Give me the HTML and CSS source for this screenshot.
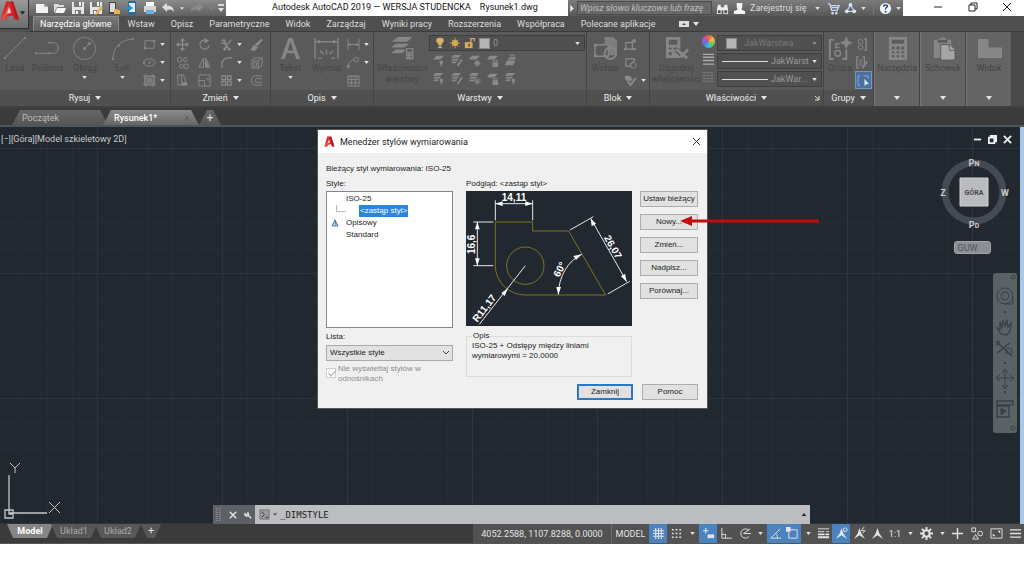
FILE: index.html
```html
<!DOCTYPE html>
<html lang="pl">
<head>
<meta charset="utf-8">
<title>Autodesk AutoCAD 2019 — WERSJA STUDENCKA Rysunek1.dwg</title>
<link rel="stylesheet" href="styles.css">
</head>
<body>
<svg class="sprite" aria-hidden="true">
  <symbol id="caret" viewBox="0 0 6 4"><path d="M0 0h6L3 4z" fill="currentColor"/></symbol>
  <symbol id="a-logo" viewBox="0 0 20 20"><path d="M6 1h7l6 18h-5l-1-4-6 1-1 3H1z" fill="#d3222a"/><path d="M1 19 9 4l3 8-5 3-2 4z" fill="#ee4a48"/><path d="m9 7 2 5-4 1z" fill="#fff" opacity=".85"/><path d="m13 1 6 18h-3L11 1z" fill="#b51a20"/></symbol>
  <symbol id="new" viewBox="0 0 14 14"><path d="M1 3h8l4 3v6H1z" fill="#f2f2f2"/><path d="M9 3v3h4z" fill="#aaa"/></symbol>
  <symbol id="open" viewBox="0 0 14 14"><path d="M1 12V3h4l1 1h5v2H4z" fill="#ddd"/><path d="m4 7h9l-2 5H2z" fill="#f5f5f5"/></symbol>
  <symbol id="save" viewBox="0 0 14 14"><path d="M1 1h12v12H1z" fill="#e6e6e6"/><path d="M3 1h8v5H3zM4 9h6v4H4z" fill="#777"/><path d="M8 1h2v4H8zM5 10h2v3H5z" fill="#f5f5f5"/></symbol>
  <symbol id="saveas" viewBox="0 0 14 14"><use href="#save"/><path d="m12 5-5 6-1 3 3-1 5-6z" fill="#e5b15b"/></symbol>
  <symbol id="web" viewBox="0 0 14 14"><path d="M2 1h7v12H2z" fill="#444"/><path d="M3 2h5v9H3z" fill="#ddd"/><path d="M7 8h3l1 1h2v4H7z" fill="#e5b15b"/></symbol>
  <symbol id="mobile" viewBox="0 0 14 14"><path d="M3 0h8v14H3z" fill="#2d6d91"/><path d="M4 2h6v9H4z" fill="#d9eaf2"/><path d="M0 6h4V4l4 3-4 3V8H0z" fill="#328cc0"/></symbol>
  <symbol id="print" viewBox="0 0 14 14"><path d="M3 1h8v4H3z" fill="#fff"/><path d="M1 5h12v6H1z" fill="#d5d5d5"/><path d="M3 9h8v4H3z" fill="#6bb2dc"/></symbol>
  <symbol id="undo" viewBox="0 0 14 14"><path d="m1 6 5-4v3c4-1 7 2 7 6-2-3-4-3-7-2v2z" fill="currentColor"/></symbol>
  <symbol id="more" viewBox="0 0 8 10"><path d="M1 1h6v2H1zM1 5h6L4 9z" fill="currentColor"/></symbol>
  <symbol id="binoc" viewBox="0 0 14 14"><path d="M2 3h3v2h1v8H1V8zM9 3h3l1 5v5H8V5h1zM6 6h2v3H6z" fill="#eee"/><path d="M2 9h3v3H2zM9 9h3v3H9z" fill="#555"/></symbol>
  <symbol id="user" viewBox="0 0 14 14"><path d="M4 1h6v5L9 8l4 2v3H1v-3l4-2-1-2z" fill="#f3f3f3"/></symbol>
  <symbol id="cart" viewBox="0 0 14 14"><g fill="none" stroke="#c9d9f2" stroke-width="1.400"><path d="M1 2h2l2 7h6l2-5H4M5 6h7"/></g><circle cx="6" cy="12" r="1.400" fill="#c9d9f2"/><circle cx="10" cy="12" r="1.400" fill="#c9d9f2"/></symbol>
  <symbol id="a360" viewBox="0 0 14 14"><path d="M7 3 3 10h8z" fill="none" stroke="#bfd3f1" stroke-width="1.400"/><g fill="#dbe6fa"><circle cx="7" cy="3" r="2"/><circle cx="3" cy="10" r="2"/><circle cx="11" cy="10" r="2"/></g></symbol>
  <symbol id="help" viewBox="0 0 14 14"><circle cx="7" cy="7" r="6" fill="#f8f8f8"/><path d="M5 5c0-3 5-2 4 0-1 1-2 1-2 3M7 9.500v2" fill="none" stroke="#234c8f" stroke-width="1.600"/></symbol>

  <symbol id="line" viewBox="0 0 26 26"><path d="M3 23 24 2" fill="none" stroke="currentColor"/><path d="M2 22h2v2H2zM23 1h2v2h-2z" fill="currentColor"/></symbol>
  <symbol id="pline" viewBox="0 0 26 26"><path d="M1 18h18c7 0 7-11 0-11h-4" fill="none" stroke="currentColor"/><path d="M0 17h2v2H0zM14 17h2v2h-2zM14 6h2v2h-2z" fill="currentColor"/></symbol>
  <symbol id="circle" viewBox="0 0 26 26"><circle cx="13" cy="13" r="11.500" fill="none" stroke="currentColor"/><path d="m12 14 6-6M12 12h2v2h-2zM17 7h2v2h-2z" stroke="currentColor" fill="currentColor"/></symbol>
  <symbol id="arc" viewBox="0 0 26 26"><path d="M3 24C3 12 11 4 24 3" fill="none" stroke="currentColor"/><path d="M2 23h2v2H2zM8 9h2v2H8zM23 2h2v2h-2z" fill="currentColor"/></symbol>
  <symbol id="rect" viewBox="0 0 14 14"><path d="M2 3h10v8H2z" fill="none" stroke="currentColor"/><path d="M1 10h2v2H1zM11 2h2v2h-2z" fill="currentColor"/></symbol>
  <symbol id="ellipse" viewBox="0 0 14 14"><ellipse cx="7" cy="7" rx="6" ry="4" fill="none" stroke="currentColor"/><path d="M6 6h2v2H6zM0 6h2v2H0z" fill="currentColor"/></symbol>
  <symbol id="hatch" viewBox="0 0 14 14"><path d="M2 2h10v10H2zM0 3h14M0 11h14M3 0v14M11 0v14" fill="none" stroke="currentColor"/><path d="M4 4h6v6H4z" fill="currentColor" opacity=".7"/></symbol>
  <symbol id="move" viewBox="0 0 14 14"><path d="M7 2v10M2 7h10" stroke="currentColor" stroke-width="1.400"/><path d="m7 0 3 3H4zM7 14l3-3H4zM0 7l3-3v6zM14 7l-3-3v6z" fill="currentColor"/></symbol>
  <symbol id="rotate" viewBox="0 0 14 14"><path d="M10 3a5 5 0 1 0 2 5" fill="none" stroke="currentColor" stroke-width="1.300"/><path d="M7 0v6l5-3z" fill="currentColor"/></symbol>
  <symbol id="trim" viewBox="0 0 14 14"><path d="m2 2 3 2 4 8M12 2 7 8l-2 4M4 1l3 7M1 5l6 2" fill="none" stroke="currentColor" stroke-width="1.500"/><circle cx="5" cy="12" r="1.500" fill="currentColor"/><circle cx="10" cy="12" r="1.500" fill="currentColor"/></symbol>
  <symbol id="erase" viewBox="0 0 14 14"><path d="m12 1 2 1-6 7-3-2z" fill="currentColor"/><path d="m4 8 4 2-2 3H1z" fill="currentColor" stroke="currentColor"/></symbol>
  <symbol id="copy" viewBox="0 0 14 14"><g fill="none" stroke="currentColor"><circle cx="4" cy="4" r="2.500"/><circle cx="10" cy="4" r="2"/><circle cx="6" cy="11" r="2"/><circle cx="11" cy="11" r="2.500"/></g></symbol>
  <symbol id="mirror" viewBox="0 0 14 14"><path d="M6 2v10H1zM8 2v10h5z" fill="none" stroke="currentColor"/><path d="M8 3v9h4z" fill="currentColor"/></symbol>
  <symbol id="fillet" viewBox="0 0 14 14"><path d="M2 13V9c0-4 3-7 7-7h4" fill="none" stroke="currentColor" stroke-width="1.300"/></symbol>
  <symbol id="box" viewBox="0 0 14 14"><path d="M2 5h7v8H2zM2 5l3-3h8v8l-4 3M9 5l4-3M4 7h3v4H4z" fill="none" stroke="currentColor"/></symbol>
  <symbol id="stretch" viewBox="0 0 14 14"><path d="M2 1h6l4 11H2zM6 1v11" fill="none" stroke="currentColor"/><path d="M6 9h6v3H6z" fill="currentColor"/></symbol>
  <symbol id="scale" viewBox="0 0 14 14"><path d="M1 1h12v12H1zM1 7h6v6M9 5h2v2" fill="none" stroke="currentColor"/></symbol>
  <symbol id="array" viewBox="0 0 14 14"><path d="M2 2h4v4H2zM8 2h4v4H8zM2 8h4v4H2zM8 8h4v4H8z" fill="none" stroke="currentColor" stroke-width="1.300"/></symbol>
  <symbol id="offset" viewBox="0 0 14 14"><path d="M13 2H6c-6 0-6 10 0 10h7M13 5H7c-2 0-2 4 0 4h6" fill="none" stroke="currentColor"/></symbol>
  <symbol id="text" viewBox="0 0 26 26"><path d="M3 24 11 2h4l8 22h-4l-2-6H9l-2 6zm7-9h6L13 6z" fill="currentColor"/></symbol>
  <symbol id="dim" viewBox="0 0 26 26"><path d="M1 2v22M25 2v22M2 6h22M13 14v5M6 15l4 4M20 15l-4 4M4 23h4M18 23h4" fill="none" stroke="currentColor" stroke-width="1.400"/><path d="m2 6 4-2v4zM24 6l-4-2v4z" fill="currentColor"/></symbol>
  <symbol id="dimlin" viewBox="0 0 14 14"><path d="M1 1v12M13 1v12M2 7h10" stroke="currentColor"/><path d="m1 7 3-2v4zM13 7l-3-2v4z" fill="currentColor"/></symbol>
  <symbol id="leader" viewBox="0 0 14 14"><path d="M1 13c0-5 2-8 7-9" fill="none" stroke="currentColor"/><circle cx="10" cy="4" r="2.500" fill="none" stroke="currentColor"/><path d="M0 10h4l-3 4z" fill="currentColor"/></symbol>
  <symbol id="table" viewBox="0 0 14 14"><path d="M1 2h12v11H1zM1 6h12M1 9.500h12M5 4v9M9 4v9M1 3h12" fill="none" stroke="currentColor"/></symbol>
  <symbol id="layers" viewBox="0 0 26 26"><path d="m8 1h15l-5 5H2zM6 8h14l-5 4H1zM6 14h11l-4 4H1z" fill="currentColor"/><path d="M16 12h9v13h-9z" fill="#858585" stroke="#555"/><path d="M18 14h5v2h-5zM18 18h1v1h-1zM21 18h2v1h-2zM18 21h1v1h-1zM21 21h2v1h-2z" fill="#505050"/></symbol>
  <symbol id="lay" viewBox="0 0 14 14"><path d="M4 1h8L9 4H1zM3 5h7L8 7H1zM3 8h5l-2 2H1z" fill="currentColor"/></symbol>
  <symbol id="lay-bulb" viewBox="0 0 14 14"><use href="#lay"/><circle cx="10" cy="9" r="2.500" fill="currentColor" stroke="#555"/><path d="M9 11h2v2H9z" fill="currentColor"/></symbol>
  <symbol id="lay-off" viewBox="0 0 14 14"><path d="M5 2h8L9 6H1z" fill="currentColor"/><circle cx="10" cy="9" r="2.500" fill="currentColor" stroke="#555"/><path d="M9 11h2v2H9z" fill="currentColor"/></symbol>
  <symbol id="lay-pen" viewBox="0 0 14 14"><use href="#lay"/><path d="m13 6-5 7" stroke="#5a5a5a" stroke-width="4"/><path d="m13 6-5 7" stroke="currentColor" stroke-width="2"/></symbol>
  <symbol id="lay-sun" viewBox="0 0 14 14"><path d="M4 2h9L9 6H1z" fill="currentColor"/><circle cx="10" cy="10" r="2.500" fill="currentColor"/><path d="M10 6v8M6 10h8M7 7l6 6M13 7l-6 6" stroke="currentColor" stroke-width=".7"/></symbol>
  <symbol id="lay-frz" viewBox="0 0 14 14"><use href="#lay"/><circle cx="10" cy="10" r="3" fill="#5a5a5a"/><path d="M10 6v8M6 10h8M7 7l6 6M13 7l-6 6" stroke="currentColor"/></symbol>
  <symbol id="lay-lock" viewBox="0 0 14 14"><path d="M4 2h9L9 6H1zM7 9h6v5H7z" fill="currentColor"/><path d="M8 9V7h4v2" fill="none" stroke="currentColor"/></symbol>
  <symbol id="lay-cur" viewBox="0 0 14 14"><path d="M3 7h9l-2 5H1zM5 4h8l-1 2H4z" fill="currentColor"/><path d="M7 1h4v3H7z" fill="none" stroke="currentColor"/></symbol>
  <symbol id="bulb" viewBox="0 0 14 14"><path d="M7 1c6 0 5 5 2 7v2H5V8C2 6 1 1 7 1z" fill="#d9b36a"/><path d="M5 11h4v2H5z" fill="#bbb"/></symbol>
  <symbol id="sun" viewBox="0 0 14 14"><circle cx="7" cy="7" r="3.500" fill="#dba954"/><path d="M7 1v12M1 7h12M3 3l8 8M11 3l-8 8" stroke="#dba954"/></symbol>
  <symbol id="lock" viewBox="0 0 14 14"><path d="M1 6h9v7H1z" fill="#d9aa5b"/><path d="M8 6V2h4v3" fill="none" stroke="#d9aa5b" stroke-width="1.500"/><path d="M5 8h2v3H5z" fill="#555"/></symbol>
  <symbol id="insert" viewBox="0 0 26 26"><path d="M12 1h9l4 4v15H12z" fill="currentColor" opacity=".8"/><path d="M2 9h14v12H2z" fill="#5a5a5a" stroke="currentColor" stroke-width="1.500"/><circle cx="18" cy="18" r="6" fill="none" stroke="currentColor" stroke-width="2"/><path d="M1 8h3v3H1zM1 19h3v3H1z" fill="currentColor"/></symbol>
  <symbol id="blk1" viewBox="0 0 14 14"><path d="M2 5h7v7H2zM8 5l3-3" fill="none" stroke="currentColor" stroke-width="1.300"/><circle cx="11" cy="3" r="2" fill="currentColor"/><path d="M0 11h3v2H0zM8 11h5v2H8z" fill="currentColor"/></symbol>
  <symbol id="blk2" viewBox="0 0 14 14"><path d="M2 3h10M2 3v8h6M7 9l5-5" fill="none" stroke="currentColor" stroke-width="1.300"/><circle cx="10" cy="10" r="3" fill="none" stroke="currentColor"/></symbol>
  <symbol id="blk3" viewBox="0 0 14 14"><path d="M1 2h5l4 4-4 4-5-4z" fill="currentColor"/><path d="m4 8 3 4 6-8" fill="none" stroke="#5a5a5a" stroke-width="4"/><path d="m4 8 3 4 6-8" fill="none" stroke="currentColor" stroke-width="2"/></symbol>
  <symbol id="match" viewBox="0 0 26 26"><path d="M2 1h15v22H2z" fill="currentColor"/><path d="M5 4h9v5H5zM5 12h3v2H5zM10 12h4v2h-4zM5 17h3v3H5z" fill="#5c5c5c"/><path d="m13 14 9 9M24 14l-7 8" stroke="#5a5a5a" stroke-width="5"/><path d="m13 14 11 9M25 14l-8 8" stroke="currentColor" stroke-width="3"/></symbol>
  <symbol id="lines" viewBox="0 0 14 14"><path d="M1 1.500h12M1 4.500h12M1 8h12M1 12h12" stroke="#aaa" stroke-width="1.500"/></symbol>
  <symbol id="dashes" viewBox="0 0 14 14"><path d="M1 2h12M1 5h12M1 8h12M1 11h12" stroke="#858585" stroke-dasharray="3 1"/></symbol>
  <symbol id="group" viewBox="0 0 26 26"><path d="M6 4H2v20h4M15 24h4V14" fill="none" stroke="currentColor" stroke-width="2"/><circle cx="10" cy="18" r="3" fill="none" stroke="currentColor" stroke-width="1.500"/><path d="M12 8H8v4h4" fill="none" stroke="currentColor" stroke-width="1.500"/><path d="m19 0 2 5 5 2-5 2-2 5-2-5-5-2 5-2z" fill="currentColor"/></symbol>
  <symbol id="ungroup" viewBox="0 0 14 14"><path d="M10 1h2v12h-2" fill="none" stroke="currentColor" stroke-width="1.500"/><circle cx="6" cy="4" r="2.500" fill="none" stroke="currentColor"/><circle cx="6" cy="10" r="2.500" fill="none" stroke="currentColor"/></symbol>
  <symbol id="gedit" viewBox="0 0 14 14"><path d="M4 1H2v12h2M8 1h2v8" fill="none" stroke="currentColor" stroke-width="1.400"/><circle cx="6" cy="5" r="1.500" fill="none" stroke="currentColor"/><circle cx="6" cy="9" r="1.500" fill="none" stroke="currentColor"/><path d="m13 6-5 7" stroke="currentColor" stroke-width="2"/></symbol>
  <symbol id="gsel" viewBox="0 0 14 14"><path d="M3 2H1v10h2M7 2h5v4" fill="none" stroke="#a8c5e8" stroke-dasharray="2 1"/><path d="M8 5v8l2-2h3z" fill="#d6e5f7"/></symbol>
  <symbol id="calc" viewBox="0 0 26 26"><path d="M4 1h19v24H4z" fill="currentColor"/><path d="M7 4h13v4H7zM7 11h3v3H7zM12 11h3v3h-3zM17 11h3v3h-3zM7 16h3v2H7zM12 16h3v2h-3zM17 16h3v2h-3zM7 20h3v2H7zM12 20h3v2h-3zM17 20h3v2h-3z" fill="#5c5c5c"/></symbol>
  <symbol id="clip" viewBox="0 0 26 26"><path d="M3 4h5l1-2h2l1-2 1 2h2l1 2h5v19H3z" fill="currentColor"/><path d="M7 4h10v3H7z" fill="#5c5c5c"/><path d="M10 9h10l5 5v11H10z" fill="#a5a5a5" stroke="#5c5c5c"/><path d="M19 9v6h6" fill="none" stroke="#666"/></symbol>
  <symbol id="view" viewBox="0 0 26 26"><path d="M1 3h11v9h14v11H1z" fill="currentColor"/></symbol>

  <symbol id="s-grid" viewBox="0 0 14 14"><path d="M4 1v12M7 1v12M10 1v12M1 4h12M1 7h12M1 10h12" stroke="currentColor" stroke-width="1.200"/></symbol>
  <symbol id="s-snap" viewBox="0 0 14 14"><path d="M2 3h2M6 3h2M10 3h2M2 7h2M6 7h2M10 7h2M2 11h2M6 11h2M10 11h2" stroke="currentColor" stroke-width="1.600"/></symbol>
  <symbol id="s-dyn" viewBox="0 0 14 14"><path d="M4 1v6M1 4h6" stroke="currentColor" stroke-width="1.200"/><path d="M6 8h7v4H6z" fill="currentColor"/></symbol>
  <symbol id="s-ortho" viewBox="0 0 14 14"><path d="M2 1v11h11M2 8h4v4" fill="none" stroke="currentColor"/></symbol>
  <symbol id="s-polar" viewBox="0 0 14 14"><path d="M12 4a5 5 0 1 0 0 6M6 7l7-5M6 7h8" fill="none" stroke="currentColor"/></symbol>
  <symbol id="s-angle" viewBox="0 0 14 14"><path d="M12 2 2 12h11" fill="none" stroke="currentColor"/><path d="M7 7c2 1 2 3 2 5" fill="none" stroke="currentColor"/></symbol>
  <symbol id="s-osnap" viewBox="0 0 14 14"><path d="M3 3h9v9H3z" fill="none" stroke="currentColor"/><path d="M0 0h5v5H0z" fill="currentColor"/></symbol>
  <symbol id="s-lw" viewBox="0 0 14 14"><path d="M1 2h12M1 5h7M10 5h3" stroke="currentColor"/><path d="M1 7h7v2H1zM9 7h4v2H9zM1 10h12v2H1z" fill="currentColor"/></symbol>
  <symbol id="s-ann" viewBox="0 0 14 14"><path d="M7 1 9 7l4 6-6-4-6 4 4-6z" fill="currentColor"/></symbol>
  <symbol id="s-ann1" viewBox="0 0 14 14"><use href="#s-ann"/><circle cx="11" cy="3" r="2" fill="none" stroke="currentColor"/></symbol>
  <symbol id="s-ann2" viewBox="0 0 14 14"><use href="#s-ann"/><path d="m12 0-3 4h4l-3 3" fill="none" stroke="currentColor"/></symbol>
  <symbol id="s-gear" viewBox="0 0 14 14"><circle cx="7" cy="7" r="3.500" fill="none" stroke="currentColor" stroke-width="2.400"/><path d="M7 0v3M7 11v3M0 7h3M11 7h3M2 2l2 2M10 10l2 2M12 2l-2 2M2 12l2-2" stroke="currentColor" stroke-width="2"/></symbol>
  <symbol id="s-plus" viewBox="0 0 14 14"><path d="M7 1v12M1 7h12" stroke="currentColor" stroke-width="1.500"/></symbol>
  <symbol id="s-iso" viewBox="0 0 14 14"><path d="M2 1h4v4H2zM6 8l3 5H3z" fill="none" stroke="currentColor"/><circle cx="11" cy="7" r="2.500" fill="none" stroke="currentColor"/></symbol>
  <symbol id="s-full" viewBox="0 0 14 14"><path d="M1 2h12v10H1z" fill="none" stroke="currentColor"/><path d="M8 4h3v3zM3 7v3h3z" fill="currentColor"/></symbol>
  <symbol id="s-menu" viewBox="0 0 14 14"><path d="M1 3h12M1 7h12M1 11h12" stroke="currentColor" stroke-width="1.400"/></symbol>
  <symbol id="w-min" viewBox="0 0 10 10"><path d="M1 5h8" stroke="currentColor"/></symbol>
  <symbol id="w-max" viewBox="0 0 10 10"><path d="M1 3h6v6H1zM3 3V1h6v6H7" fill="none" stroke="currentColor"/></symbol>
  <symbol id="w-x" viewBox="0 0 10 10"><path d="m1 1 8 8M9 1 1 9" stroke="currentColor"/></symbol>
</svg>

<div class="app">
  <header class="top">
    <button class="app-menu" aria-label="Menu aplikacji"><svg class="logo"><use href="#a-logo"/></svg><svg class="caret"><use href="#caret"/></svg></button>
    <div class="titlebar">
      <div class="qat">
        <button aria-label="Nowy"><svg><use href="#new"/></svg></button>
        <button aria-label="Otwórz"><svg><use href="#open"/></svg></button>
        <button aria-label="Zapisz"><svg><use href="#save"/></svg></button>
        <button aria-label="Zapisz jako"><svg><use href="#saveas"/></svg></button>
        <button aria-label="Otwórz z sieci"><svg><use href="#web"/></svg></button>
        <button aria-label="Zapisz na urządzeniu"><svg><use href="#mobile"/></svg></button>
        <button aria-label="Drukuj"><svg><use href="#print"/></svg></button>
        <button aria-label="Cofnij"><svg><use href="#undo"/></svg></button>
        <svg class="caret"><use href="#caret"/></svg>
        <button class="dim" aria-label="Ponów"><svg class="flip"><use href="#undo"/></svg></button>
        <svg class="caret dim"><use href="#caret"/></svg>
        <button class="narrow" aria-label="Dostosuj"><svg><use href="#more"/></svg></button>
      </div>
      <div class="title"><span>Autodesk AutoCAD 2019 — WERSJA STUDENCKA</span><span>Rysunek1.dwg</span></div>
      <div class="info">
        <svg class="play" viewBox="0 0 4 8"><path d="M0 0v8l4-4z" fill="#eee"/></svg>
        <input type="text" class="search" aria-label="Szukaj" placeholder="Wpisz słowo kluczowe lub frazę">
        <button class="find" aria-label="Szukaj"><svg><use href="#binoc"/></svg></button>
        <button class="signin"><svg><use href="#user"/></svg>Zarejestruj się</button>
        <svg class="caret"><use href="#caret"/></svg>
        <button aria-label="Sklep"><svg><use href="#cart"/></svg></button>
        <button aria-label="Autodesk 360"><svg><use href="#a360"/></svg></button>
        <svg class="caret"><use href="#caret"/></svg>
        <button class="helpbtn" aria-label="Pomoc"><svg><use href="#help"/></svg></button>
        <svg class="caret"><use href="#caret"/></svg>
      </div>
      <div class="winctl">
        <button aria-label="Minimalizuj"><svg><use href="#w-min"/></svg></button>
        <button aria-label="Przywróć"><svg><use href="#w-max"/></svg></button>
        <button aria-label="Zamknij program"><svg><use href="#w-x"/></svg></button>
      </div>
    </div>
    <nav class="tabs">
      <button class="on">Narzędzia główne</button><button>Wstaw</button><button>Opisz</button><button>Parametryczne</button><button>Widok</button><button>Zarządzaj</button><button>Wyniki pracy</button><button>Rozszerzenia</button><button>Współpraca</button><button>Polecane aplikacje</button>
      <button class="ribmode" aria-label="Tryb wstążki"><svg class="ribicon" viewBox="0 0 10 6"><path d="M0 0h10v6H0z" fill="#ddd"/><path d="M3 4h4L5 2z" fill="#444"/></svg><svg class="caret"><use href="#caret"/></svg></button>
    </nav>
  </header>

  <div class="ribbon">
    <section class="panel draw">
      <div class="tools">
        <button class="big"><svg><use href="#line"/></svg>Linia</button>
        <button class="big"><svg><use href="#pline"/></svg>Polilinia</button>
        <button class="big"><svg><use href="#circle"/></svg>Okrąg<svg class="caret"><use href="#caret"/></svg></button>
        <button class="big"><svg><use href="#arc"/></svg>Łuk<svg class="caret"><use href="#caret"/></svg></button>
        <div class="small one">
          <button aria-label="Prostokąt"><svg><use href="#rect"/></svg><svg class="caret"><use href="#caret"/></svg></button>
          <button aria-label="Elipsa"><svg><use href="#ellipse"/></svg><svg class="caret"><use href="#caret"/></svg></button>
          <button aria-label="Kreskuj"><svg><use href="#hatch"/></svg><svg class="caret"><use href="#caret"/></svg></button>
        </div>
      </div>
      <button class="name">Rysuj<svg class="caret"><use href="#caret"/></svg></button>
    </section>
    <section class="panel">
      <div class="tools">
        <div class="small mod">
          <button aria-label="Przesuń"><svg><use href="#move"/></svg></button><button aria-label="Obróć"><svg><use href="#rotate"/></svg></button><button aria-label="Utnij"><svg><use href="#trim"/></svg><svg class="caret"><use href="#caret"/></svg></button><button aria-label="Wymaż"><svg><use href="#erase"/></svg></button>
          <button aria-label="Kopiuj"><svg><use href="#copy"/></svg></button><button aria-label="Lustro"><svg><use href="#mirror"/></svg></button><button aria-label="Zaokrągl"><svg><use href="#fillet"/></svg><svg class="caret"><use href="#caret"/></svg></button><button aria-label="Rozbij"><svg><use href="#box"/></svg></button>
          <button aria-label="Rozciągnij"><svg><use href="#stretch"/></svg></button><button aria-label="Skala"><svg><use href="#scale"/></svg></button><button aria-label="Szyk"><svg><use href="#array"/></svg><svg class="caret"><use href="#caret"/></svg></button><button aria-label="Odsuń"><svg><use href="#offset"/></svg></button>
        </div>
      </div>
      <button class="name">Zmień<svg class="caret"><use href="#caret"/></svg></button>
    </section>
    <section class="panel">
      <div class="tools">
        <button class="big"><svg><use href="#text"/></svg>Tekst<svg class="caret"><use href="#caret"/></svg></button>
        <button class="big"><svg><use href="#dim"/></svg>Wymiar</button>
        <div class="small one">
          <button aria-label="Liniowy"><svg><use href="#dimlin"/></svg><svg class="caret"><use href="#caret"/></svg></button>
          <button aria-label="Odniesienie"><svg><use href="#leader"/></svg><svg class="caret"><use href="#caret"/></svg></button>
          <button aria-label="Tabela"><svg><use href="#table"/></svg></button>
        </div>
      </div>
      <button class="name">Opis<svg class="caret"><use href="#caret"/></svg></button>
    </section>
    <section class="panel">
      <div class="tools">
        <button class="big wide"><svg><use href="#layers"/></svg>Właściwości warstwy</button>
        <div class="layerbox">
          <label class="combo light"><svg><use href="#bulb"/></svg><svg><use href="#sun"/></svg><svg><use href="#lock"/></svg><span class="swatch"></span><select aria-label="Warstwa"><option>0</option></select><svg class="caret"><use href="#caret"/></svg></label>
          <div class="small lay">
            <button aria-label="Wyłącz"><svg><use href="#lay-off"/></svg></button><button aria-label="Izoluj"><svg><use href="#lay-pen"/></svg></button><button aria-label="Zablokuj widok"><svg><use href="#lay-sun"/></svg></button><button aria-label="Zamknij warstwę"><svg><use href="#lay-lock"/></svg></button><button aria-label="Uaktualnij"><svg><use href="#lay-cur"/></svg></button>
            <button aria-label="Włącz wszystkie"><svg><use href="#lay-bulb"/></svg></button><button aria-label="Anuluj izolację"><svg><use href="#lay-pen"/></svg></button><button aria-label="Odblokuj widok"><svg><use href="#lay-frz"/></svg></button><button aria-label="Otwórz warstwę"><svg><use href="#lay-lock"/></svg></button><button aria-label="Dopasuj warstwę"><svg><use href="#lay-bulb"/></svg></button>
          </div>
        </div>
      </div>
      <button class="name">Warstwy<svg class="caret"><use href="#caret"/></svg></button>
    </section>
    <section class="panel">
      <div class="tools">
        <button class="big"><svg><use href="#insert"/></svg>Wstaw</button>
        <div class="small one">
          <button aria-label="Utwórz blok"><svg><use href="#blk1"/></svg></button>
          <button aria-label="Edytuj blok"><svg><use href="#blk2"/></svg></button>
          <button aria-label="Edytuj atrybuty"><svg><use href="#blk3"/></svg><svg class="caret"><use href="#caret"/></svg></button>
        </div>
      </div>
      <button class="name">Blok<svg class="caret"><use href="#caret"/></svg></button>
    </section>
    <section class="panel">
      <div class="tools">
        <button class="big wide"><svg><use href="#match"/></svg>Uzgodnij właściwości</button>
        <div class="props">
          <span class="wheel"></span><label class="combo"><span class="swatch"></span><select aria-label="Kolor" disabled><option>JakWarstwa</option></select><svg class="caret dim"><use href="#caret"/></svg></label>
          <svg class="pi"><use href="#lines"/></svg><label class="combo"><span class="rule"></span><select class="lw" aria-label="Szerokość linii"><option>JakWarst</option></select><svg class="caret"><use href="#caret"/></svg></label>
          <svg class="pi"><use href="#dashes"/></svg><label class="combo"><span class="rule"></span><select class="lw" aria-label="Rodzaj linii"><option>JakWar...</option></select><svg class="caret"><use href="#caret"/></svg></label>
        </div>
      </div>
      <div class="name">Właściwości<svg class="caret"><use href="#caret"/></svg><button class="launch" aria-label="Okno właściwości"><svg viewBox="0 0 6 6"><path d="m1 1 4 4M5 1v4H1" fill="none" stroke="#ddd"/></svg></button></div>
    </section>
    <section class="panel">
      <div class="tools">
        <button class="big"><svg><use href="#group"/></svg>Grupa</button>
        <div class="small grp">
          <button aria-label="Rozgrupuj"><svg><use href="#ungroup"/></svg></button>
          <button aria-label="Edytuj grupę"><svg><use href="#gedit"/></svg></button>
          <button class="lit" aria-label="Wybór grupy"><svg><use href="#gsel"/></svg></button>
        </div>
      </div>
      <button class="name">Grupy<svg class="caret"><use href="#caret"/></svg></button>
    </section>
    <section class="panel slim">
      <div class="tools"><button class="big"><svg><use href="#calc"/></svg>Narzędzia</button></div>
      <button class="name" aria-label="Rozwiń Narzędzia"><svg class="caret"><use href="#caret"/></svg></button>
    </section>
    <section class="panel slim">
      <div class="tools"><button class="big"><svg><use href="#clip"/></svg>Schowek</button></div>
      <button class="name" aria-label="Rozwiń Schowek"><svg class="caret"><use href="#caret"/></svg></button>
    </section>
    <section class="panel slim">
      <div class="tools"><button class="big"><svg><use href="#view"/></svg>Widok</button></div>
      <button class="name" aria-label="Rozwiń Widok"><svg class="caret"><use href="#caret"/></svg></button>
    </section>
  </div>

  <nav class="files">
    <button class="file">Początek</button>
    <button class="file on">Rysunek1*<svg><use href="#w-x"/></svg></button>
    <button class="file add" aria-label="Nowy rysunek">+</button>
  </nav>

  <main class="canvas">
    <p class="viewlabel">[−][Góra][Model szkieletowy 2D]</p>
    <div class="docctl">
      <button aria-label="Minimalizuj rysunek"><svg><use href="#w-min"/></svg></button><button aria-label="Przywróć rysunek"><svg><use href="#w-max"/></svg></button><button aria-label="Zamknij rysunek"><svg><use href="#w-x"/></svg></button>
    </div>
    <svg class="cube" viewBox="0 0 74 78">
      <circle cx="37" cy="38" r="29" fill="none" stroke="#454b55" stroke-width="7"/>
      <path d="M23 24h28v28H23z" fill="#b9bbbd" stroke="#d2d3d4"/>
      <text x="37" y="41" class="face">GÓRA</text>
      <text x="37" y="12">P<tspan font-size="7">N</tspan></text><text x="6" y="42">Z</text><text x="68" y="42">W</text><text x="37" y="74">P<tspan font-size="7">D</tspan></text>
    </svg>
    <button class="ucs">GUW</button>
    <svg class="navbar" viewBox="0 0 24 160" fill="none" stroke="#3a4047">
      <circle cx="20" cy="4" r="2"/><circle cx="20" cy="155" r="2"/>
      <circle cx="12" cy="23" r="8"/><circle cx="12" cy="23" r="4"/><path d="M12 31h8v-8"/>
      <path d="M11 39h2M11 90h2M11 119h2" stroke-width="2"/>
      <path d="m8 61-4-6 3 1V49l2 5 1-7 2 6 2-6 1 7 3-4-1 8-3 4z" stroke-width="1.300"/>
      <path d="m4 69 15 14M17 70 4 80" stroke-width="1.500"/><circle cx="16" cy="78" r="3"/><circle cx="5" cy="70" r="2"/>
      <path d="M12 97v18M4 105h16M9 100l3-4 3 4M9 112l3 4 3-4M7 102l-4 3 4 3M17 102l4 3-4 3"/>
      <path d="M4 128h16v4H4zM4 133h12v11H4z" stroke-width="1.500"/><path d="m8 135 5 3-5 4z" fill="#3a4047"/>
    </svg>
    <svg class="axes" viewBox="0 0 66 60" fill="none" stroke="#c3c6ca">
      <path d="M9 13v39M9 51h38M5 48h8v8H5zM9 48v4h4" stroke-width="1.300"/>
      <path d="m10 1 5 5 5-5M15 6v5M49 40l11 11M60 40 49 51"/>
    </svg>

    <section class="dialog" aria-label="Menedżer stylów wymiarowania">
      <header class="dlg-title"><svg><use href="#a-logo"/></svg><h1>Menedżer stylów wymiarowania</h1><button aria-label="Zamknij okno"><svg><use href="#w-x"/></svg></button></header>
      <div class="dlg-body">
        <p class="current">Bieżący styl wymiarowania: ISO-25</p>
        <div class="col">
          <p class="lbl">Style:</p>
          <ul class="list">
            <li>ISO-25</li>
            <li class="child"><mark>&lt;zastąp styl&gt;</mark></li>
            <li class="ann"><svg viewBox="0 0 8 8"><path d="M4 1 1 7h6zM4 1l1 5" fill="#c4d9ee" stroke="#48749e"/></svg>Opisowy</li>
            <li>Standard</li>
          </ul>
          <label class="lbl lista" for="filter">Lista:</label>
          <div class="pick"><select id="filter"><option>Wszystkie style</option></select><svg viewBox="0 0 8 5"><path d="m1 1 3 3 3-3" fill="none" stroke="#444"/></svg></div>
          <label class="check"><input type="checkbox" checked disabled><span>Nie wyświetlaj stylów w odnośnikach</span></label>
        </div>
        <div class="col">
          <p class="lbl">Podgląd: &lt;zastąp styl&gt;</p>
          <svg class="preview" viewBox="0 0 498 405">
            <g fill="none" stroke="#7d7420" stroke-width="3"><path d="M88 93h112v27h108l111 192H178a90 88 0 0 1-90-88z"/><circle cx="178" cy="224" r="56"/></g>
            <g fill="none" stroke="#e8e8e8" stroke-width="3"><path d="M88 88V28M200 88V28M88 38h112M82 93H22M82 224H22M34 93v131M312 117l70-40M425 309l66-38M374 82l108 190M178 224 40 400M347 190c-42 20-69 68-70 120"/></g>
            <g fill="#fff"><path d="m88 38 22-7v14zM200 38l-22-7v14zM34 93l-7 22h14zM34 224l-7-22h14zM374 82l3 24 13-8zM482 272l-5-24-12 8zM126 292l-20 14 10 9zM347 190l-25 5 8 12zM277 312l-6-24h14z"/></g>
            <g class="dims"><text x="144" y="30">14,11</text><text transform="translate(26 160) rotate(-90)">16,6</text><text transform="translate(432 173) rotate(60)">26,07</text><text transform="translate(290 240) rotate(-62)">60°</text><text transform="translate(63 358) rotate(-52)">R11,17</text></g>
          </svg>
          <fieldset class="desc"><legend>Opis</legend>ISO-25 + Odstępy między liniami wymiarowymi = 20.0000</fieldset>
        </div>
        <div class="col actions">
          <button>Ustaw bieżący</button><button>Nowy...</button><button>Zmień...</button><button>Nadpisz...</button><button>Porównaj...</button>
        </div>
        <footer class="dlg-foot"><button class="default">Zamknij</button><button>Pomoc</button></footer>
      </div>
    </section>
    <svg class="arrow" viewBox="0 0 140 12"><path d="M0 6 12 1v10z" fill="#c00d0d"/><path d="M10 6h129" stroke="#c00d0d" stroke-width="3"/></svg>

    <div class="cmd">
      <svg class="grip" viewBox="0 0 6 16"><path d="M1 1v14M4 1v14" stroke="#aaa" stroke-dasharray="1 1"/></svg>
      <button aria-label="Zamknij wiersz"><svg viewBox="0 0 10 10"><path d="m1 1 8 8M9 1 1 9" stroke="#ddd" stroke-width="2"/></svg></button>
      <button aria-label="Dostosuj wiersz"><svg viewBox="0 0 10 10"><path d="m4 4 5 5" stroke="#ddd" stroke-width="2"/><path d="M1 2a3 3 0 1 0 3-1v2L3 4z" fill="#ddd"/></svg></button>
      <div class="cmdline"><svg class="prompt" viewBox="0 0 12 12"><path d="M1 1h10v10H1z" fill="#9a9b9d" stroke="#707274"/><path d="m3 3 3 3-3 3M7 9h3" fill="none" stroke="#333"/></svg><svg class="caret"><use href="#caret"/></svg><input type="text" aria-label="Wiersz poleceń" value="_DIMSTYLE"><svg class="caret up"><use href="#caret"/></svg></div>
    </div>
  </main>

  <footer class="status">
    <nav class="layouts"><button class="on">Model</button><button>Układ1</button><button>Układ2</button><button class="add" aria-label="Nowy układ">+</button></nav>
    <div class="stools">
      <span class="coords">4052.2588, 1107.8288, 0.0000</span>
      <button class="space">MODEL</button>
      <button class="lit" aria-label="Siatka"><svg><use href="#s-grid"/></svg></button>
      <button aria-label="Skok"><svg><use href="#s-snap"/></svg></button>
      <svg class="caret"><use href="#caret"/></svg>
      <button class="lit" aria-label="Dane dynamiczne"><svg><use href="#s-dyn"/></svg></button>
      <button aria-label="Orto"><svg><use href="#s-ortho"/></svg></button>
      <button aria-label="Biegunowe"><svg><use href="#s-polar"/></svg></button>
      <svg class="caret"><use href="#caret"/></svg>
      <button class="lit" aria-label="Śledzenie"><svg><use href="#s-angle"/></svg></button>
      <button class="lit" aria-label="Obiekt"><svg><use href="#s-osnap"/></svg></button>
      <svg class="caret"><use href="#caret"/></svg>
      <button aria-label="Szerokość"><svg><use href="#s-lw"/></svg></button>
      <button class="lit" aria-label="Widoczność opisu"><svg><use href="#s-ann1"/></svg></button>
      <button aria-label="Autoskala"><svg><use href="#s-ann2"/></svg></button>
      <button aria-label="Skala opisu"><svg><use href="#s-ann"/></svg></button>
      <button>1:1</button>
      <svg class="caret"><use href="#caret"/></svg>
      <button aria-label="Obszar roboczy"><svg><use href="#s-gear"/></svg></button>
      <svg class="caret"><use href="#caret"/></svg>
      <button aria-label="Monitor"><svg><use href="#s-plus"/></svg></button>
      <button aria-label="Izoluj obiekty"><svg><use href="#s-iso"/></svg></button>
      <button aria-label="Pełny ekran"><svg><use href="#s-full"/></svg></button>
      <button aria-label="Dostosowanie"><svg><use href="#s-menu"/></svg></button>
    </div>
  </footer>
</div>
</body>
</html>
```

FILE: styles.css
```css
* { box-sizing: border-box; }
body { margin: 0; background: #fff; font: 9px/12px Roboto, "Noto Sans", sans-serif; color: #ddd; }
button, select, input { font: inherit; color: inherit; background: none; border: 0; padding: 0; margin: 0; border-radius: 0; }
button { display: flex; align-items: center; justify-content: center; white-space: nowrap; }
select { appearance: none; }
p, ul, h1 { margin: 0; padding: 0; }
svg { flex: none; display: block; }
.sprite { position: absolute; width: 0; height: 0; }
.caret { width: 6px; height: 4px; color: #e4e4e4; }
.dim { color: #8a8a8a; }
.flip { transform: scaleX(-1); }
.app { display: flex; flex-direction: column; min-height: calc(100vh - 30px); }

/* title bar and ribbon tabs */
.top { display: grid; grid-template-columns: 29px 1fr; grid-template-rows: 16px 16px; background: #4f4f4f; }
.app-menu { grid-row: 1 / 3; align-items: flex-start; justify-content: flex-start; height: 29px; background: linear-gradient(#999, #6d6d6d); border: solid #303030; border-width: 0 1px 1px 0; }
.app-menu .logo { width: 20px; height: 21px; }
.app-menu .caret { width: 5px; margin-top: 11px; color: #222; }
.titlebar { display: flex; background: #fff; }
.qat { display: flex; align-items: center; width: 197px; padding-left: 4px; background: linear-gradient(#8a8a8a, #606060); }
.qat button { flex: none; width: 18px; }
.qat button svg { width: 14px; height: 14px; }
.qat .caret { width: 4px; height: 3px; margin: 0 4px 0 3px; }
.qat .narrow { width: 8px; }
.qat .narrow svg { width: 8px; height: 10px; }
.title { flex: 1; display: flex; justify-content: center; gap: 9px; padding-left: 16px; color: #111; line-height: 14px; white-space: nowrap; }
.info { display: flex; align-items: center; width: 335px; background: linear-gradient(#7c7c7c, #585858); }
.info .play { width: 4px; height: 7px; margin: 0 3px 0 2px; }
.info .search { flex: none; width: 135px; height: 14px; padding: 0 2px; font-style: italic; background: #686868; border: 1px solid #4b4b4b; }
.search::placeholder { color: #bdbdbd; opacity: 1; }
.info button svg { width: 13px; height: 13px; }
.info button { margin-right: 4px; }
.info .find { margin: 0 4px; }
.info .signin { gap: 4px; margin-right: 8px; }
.info .caret { width: 5px; height: 3px; margin-right: 7px; }
.info .helpbtn { padding-left: 5px; border-left: 1px solid #777; }
.winctl { display: flex; width: 121px; justify-content: space-between; align-items: flex-start; padding: 2px 12px 0 30px; color: #222; }
.winctl svg { width: 10px; height: 10px; }
.tabs { display: flex; padding-left: 4px; border-bottom: 1px solid #3c3c3c; }
.tabs button { padding: 0 8px; }
.tabs .on { background: linear-gradient(#777, #5e5e5e); color: #fff; border: solid #8a8a8a; border-width: 1px 1px 0; margin-right: 1px; padding: 0 6px; }
.tabs .ribmode { gap: 4px; margin-left: 8px; }
.ribicon { width: 10px; height: 6px; }

/* ribbon */
.ribbon { display: grid; grid-template-columns: 171px 100px 103px 213px 63px 174px 50px 46px 46px 46px 1fr; height: 76px; background: #4a4a4a; border-bottom: 2px solid #404040; }
.panel { display: flex; flex-direction: column; min-width: 0; background: #5a5a5a; border-right: 1px solid #434343; }
.tools { flex: 1; display: flex; justify-content: center; padding: 3px 1px 0; color: #858585; }
.name { display: flex; align-items: center; justify-content: center; height: 16px; gap: 5px; color: #eee; background: #505050; position: relative; }
.launch { position: absolute; right: 3px; top: 5px; }
.launch svg { width: 6px; height: 6px; }
.big { flex-direction: column; justify-content: flex-start; width: 38px; height: 54px; padding-top: 1px; color: #454545; line-height: 11px; }
.big > svg:first-child { width: 25px; height: 25px; margin-bottom: 2px; color: #868686; }
.big .caret { width: 5px; height: 3px; margin-top: 2px; }
.wide { width: 54px; white-space: normal; }
.draw .big:first-child { width: 28px; }
.small { display: grid; grid-auto-rows: 18px; color: #8a8a8a; }
.small button { justify-content: flex-start; gap: 4px; }
.small button svg:first-child { width: 13px; height: 13px; }
.small .caret { width: 5px; height: 3px; }
.one { width: 26px; margin-left: 2px; }
.mod { grid-template-columns: 22px 22px 30px 15px; }
.lay { grid-template-columns: repeat(5, 18px); padding-left: 3px; }
.layerbox { flex: 1; }
.combo { display: flex; align-items: center; gap: 3px; height: 16px; padding: 0 4px; background: #505050; border: 1px solid #3f3f3f; color: #999; }
.combo select { flex: 1; min-width: 0; height: 14px; line-height: 12px; }
.combo > svg:not(.caret) { width: 12px; height: 12px; }
.combo .caret { width: 5px; height: 3px; }
.swatch { width: 11px; height: 11px; background: #b5b5b5; border: 1px solid #888; }
.rule { width: 46px; height: 1px; background: #ddd; }
.props { flex: 1; display: grid; grid-template-columns: 13px 1fr; grid-auto-rows: 18px; gap: 0 2px; }
.props .swatch { margin: 0 4px; }
.props select:disabled { color: #7a7a7a; opacity: 1; }
.pi { width: 13px; height: 13px; }
.wheel { width: 13px; height: 13px; border-radius: 50%; background: conic-gradient(#e85b4b, #f5bc38, #75c756, #3ebbd1, #5178df, #b652cb, #e85b4b); }
.grp { width: 17px; }
.small .lit { justify-content: center; background: #4d6f9c; border: 1px solid #7598c2; }
.panel:nth-child(7) .big { width: 30px; }
.slim { background: #646464; border-left: 1px solid #777; }
.slim .name { background: none; }
.slim .big { width: 44px; }

/* drawing tabs */
.files { display: flex; height: 19px; padding: 2px 0 0 12px; background: #3b3b3b; border-bottom: 2px solid #50545e; }
.file { width: 96px; padding-left: 10px; justify-content: flex-start; background: linear-gradient(#686868, #555); color: #bbb; clip-path: polygon(8px 0, calc(100% - 8px) 0, 100% 100%, 0 100%); border-radius: 6px 6px 0 0; }
.file.on { background: linear-gradient(#8b8b8b, #666); color: #fff; margin-left: -5px; justify-content: space-between; padding: 0 9px 0 11px; font-weight: 500; }
.file svg { width: 6px; height: 6px; color: #444; }
.file.add { width: 22px; padding: 0; justify-content: center; font-size: 12px; color: #ddd; }

/* drawing area */
.canvas { flex: 1; position: relative; min-height: 396px; border-right: 4px solid #a9c7ea; background-color: #212830;
  background-image: linear-gradient(90deg, #2d353f 1px, transparent 1px), linear-gradient(#2d353f 1px, transparent 1px), linear-gradient(90deg, #252c35 1px, transparent 1px), linear-gradient(#252c35 1px, transparent 1px);
  background-size: 125px 125px, 125px 125px, 25px 25px, 25px 25px; background-position: 97px 21px; }
.viewlabel { padding: 6px 1px; color: #ccc; }
.docctl { position: absolute; top: 8px; right: 8px; display: flex; gap: 6px; color: #eee; }
.docctl svg { width: 9px; height: 9px; stroke-width: 2; }
.cube { position: absolute; top: 27px; right: 9px; width: 74px; height: 78px; fill: #ccc; font-size: 9px; font-weight: 700; text-anchor: middle; }
.cube .face { fill: #44484d; font-size: 7px; }
.ucs { position: absolute; top: 114px; right: 29px; width: 37px; height: 13px; padding-right: 10px; border-radius: 3px; background: #8b8f94; border: 1px solid #a0a3a7; color: #50555b; }
.navbar { position: absolute; top: 146px; right: 3px; width: 24px; height: 160px; background: #5c6166; border-radius: 3px; }
.axes { position: absolute; left: 0; bottom: 2px; width: 66px; height: 60px; }
.arrow { position: absolute; left: 680px; top: 88px; width: 140px; height: 12px; }

/* dimension style dialog */
.dialog { position: absolute; left: 317px; top: 2px; width: 391px; background: #f0f0f0; border: 1px solid #555; color: #1c1c1c; font: 8px/10px "Liberation Sans", sans-serif; }
.dlg-title { display: flex; align-items: center; gap: 5px; height: 23px; padding: 0 6px; background: #fff; }
.dlg-title svg { width: 11px; height: 11px; }
.dlg-title h1 { flex: 1; font: 9px/12px Roboto, sans-serif; }
.dlg-title button svg { width: 9px; height: 9px; }
.dlg-body { display: grid; grid-template-columns: 127px 1fr 58px; padding: 11px 9px 8px 8px; }
.current, .dlg-foot { grid-column: 1 / -1; }
.col { display: flex; flex-direction: column; }
.col:nth-child(3) { padding: 0 8px 0 13px; }
.lbl { height: 10px; margin: 5px 0 2px; }
.list { height: 137px; padding-top: 1px; background: #fff; border: 1px solid #82878e; list-style: none; }
.list li { display: flex; align-items: center; height: 12px; padding-left: 19px; }
.list .child { padding-left: 32px; position: relative; }
.list .child::before { content: ""; position: absolute; left: 9px; top: 0; width: 9px; height: 6px; border: solid #bbb; border-width: 0 0 1px 1px; }
.list .ann { padding-left: 4px; gap: 7px; }
.list .ann svg { width: 8px; height: 8px; }
mark { background: #2a86dc; color: #fff; line-height: 12px; padding: 0 1px; }
.lista { margin-top: 4px; margin-bottom: 3px; }
.pick { position: relative; }
.pick select { width: 100%; height: 16px; padding: 0 3px; background: #e2e2e2; border: 1px solid #aaa; }
.pick svg { position: absolute; right: 3px; top: 5px; width: 8px; height: 5px; }
.check { display: flex; gap: 2px; margin-top: 3px; color: #8d8d8d; }
.check input { appearance: none; flex: none; width: 10px; height: 10px; margin-top: 4px; border: 1px solid #ccc; background: #fff; }
.check input::before { content: ""; display: block; width: 3px; height: 6px; margin-left: 3px; border: solid #aaa; border-width: 0 1px 1px 0; transform: rotate(45deg); }
.preview { width: 100%; height: 135px; background: #212830; }
.dims { fill: #fff; font-size: 30px; font-weight: 700; text-anchor: middle; }
.desc { height: 46px; margin: 5px 0 0; padding: 0 5px; border: 1px solid #dcdcdc; }
.desc legend { padding: 0 1px; }
.actions { gap: 7px; padding-top: 17px; }
.actions button, .dlg-foot button { height: 16px; background: #e1e1e1; border: 1px solid #adadad; }
.dlg-foot { display: flex; justify-content: flex-end; gap: 9px; }
.dlg-foot button { width: 56px; }
.dlg-foot .default { border: 2px solid #2a78c8; }

/* command line */
.cmd { position: absolute; left: 213px; bottom: 0; width: 597px; height: 19px; display: flex; align-items: center; background: #5d6064; }
.cmd .grip { width: 6px; height: 16px; margin: 0 3px; }
.cmd button svg { width: 8px; height: 8px; }
.cmd button { width: 15px; }
.cmdline { flex: 1; display: flex; align-items: center; gap: 3px; align-self: stretch; background: #bcbdc0; color: #222; padding: 0 3px 0 4px; }
.cmdline .prompt { width: 11px; height: 11px; }
.cmdline .caret { width: 4px; height: 3px; color: #555; }
.cmdline .up { width: 6px; transform: rotate(180deg); color: #222; }
.cmdline input { flex: 1; min-width: 0; font: 9px/12px "DejaVu Sans Mono", monospace; }

/* status bar */
.status { display: flex; justify-content: space-between; height: 20px; background: #3b3b3b; border-bottom: 1px solid #555; }
.layouts { display: flex; height: 14px; padding-left: 7px; }
.layouts button { width: 46px; margin-right: -2px; background: #575757; color: #aaa; clip-path: polygon(0 0, 100% 0, calc(100% - 6px) 100%, 6px 100%); }
.layouts .on { background: #858585; color: #fff; font-weight: 700; }
.layouts .add { width: 20px; margin-left: 2px; color: #ddd; font-size: 11px; }
.stools { display: grid; align-items: center; justify-items: center; grid-template-columns: 138px 38px 18px 18px 14px 18px 18px 18px 14px 16px 18px 14px 17px 18px 18px 18px 18px 12px 20px 12px 18px 21px 19px 18px; background: #525252; color: #e4e4e4; }
.stools button { width: 100%; height: 19px; }
.stools button svg { width: 13px; height: 13px; }
.stools .space { border-left: 1px solid #6a6a6a; }
.stools .lit { background: #4b83bf; }
.stools .caret { width: 5px; height: 3px; }
```
